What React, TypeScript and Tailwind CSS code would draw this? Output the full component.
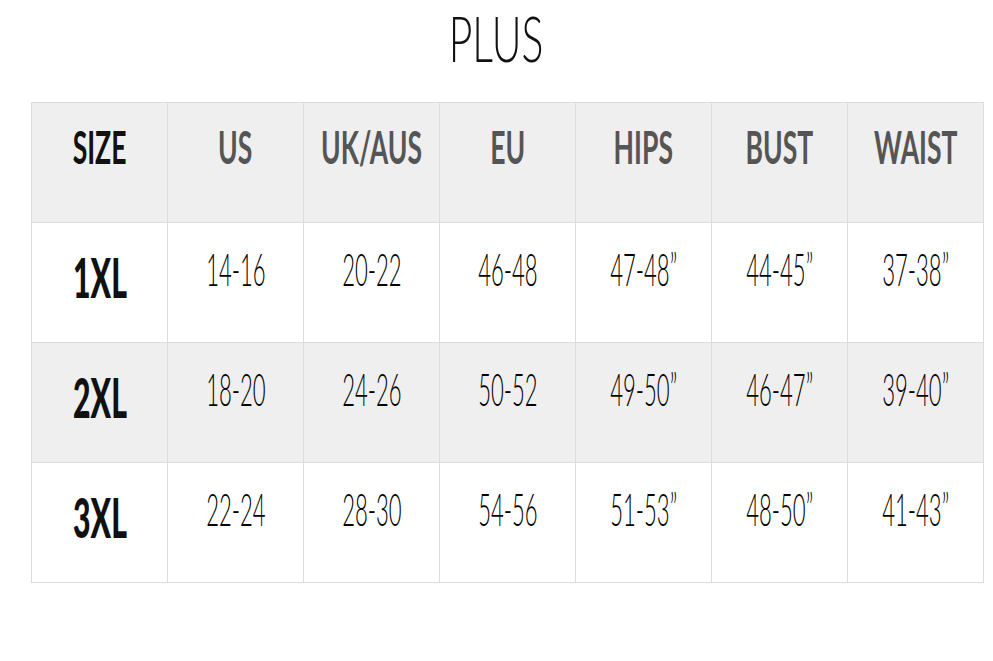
import React from "react";

const headers = ["SIZE", "US", "UK/AUS", "EU", "HIPS", "BUST", "WAIST"];
const rows = [
  ["1XL", "14-16", "20-22", "46-48", "47-48\u201D", "44-45\u201D", "37-38\u201D"],
  ["2XL", "18-20", "24-26", "50-52", "49-50\u201D", "46-47\u201D", "39-40\u201D"],
  ["3XL", "22-24", "28-30", "54-56", "51-53\u201D", "48-50\u201D", "41-43\u201D"],
];

export default function App() {
  return (
    <div
      className="w-[993px] h-[661px] bg-white overflow-hidden"
      style={{ fontFamily: "Lato, 'Open Sans', sans-serif" }}
    >
      <div className="h-[102px] flex justify-center items-start pt-0">
        <span className="inline-block whitespace-nowrap text-[64px] leading-[76px] font-light text-[#111] scale-x-[0.64]">
          PLUS
        </span>
      </div>
      <div className="ml-[31px] w-[953px] grid grid-cols-[repeat(7,136px)] border-l border-t border-[#dcdcdc]">
        {headers.map((h, i) => (
          <div
            key={h}
            className="h-[120px] bg-[#efefef] border-r border-b border-[#dcdcdc] flex items-center justify-center pb-[30px]"
          >
            <span
              className={
                "inline-block whitespace-nowrap text-[45px] leading-none font-bold scale-x-[0.59] " +
                (i === 0 ? "text-[#111]" : "text-[#555]")
              }
            >
              {h}
            </span>
          </div>
        ))}
        {rows.map((r, ri) =>
          r.map((c, ci) => (
            <div
              key={ri + "-" + ci}
              className={
                "h-[120px] border-r border-b border-[#dcdcdc] flex items-center justify-center " +
                (ri === 1 ? "bg-[#efefef] " : "bg-white ") +
                (ci === 0 ? "pb-[10px]" : "pb-[28px]")
              }
            >
              {ci === 0 ? (
                <span className="inline-block whitespace-nowrap text-[55px] leading-none font-black text-[#111] scale-x-[0.55]">
                  {c}
                </span>
              ) : (
                <span className="inline-block whitespace-nowrap text-[46px] leading-none font-light text-black scale-x-[0.48]">
                  {c}
                </span>
              )}
            </div>
          ))
        )}
      </div>
    </div>
  );
}
